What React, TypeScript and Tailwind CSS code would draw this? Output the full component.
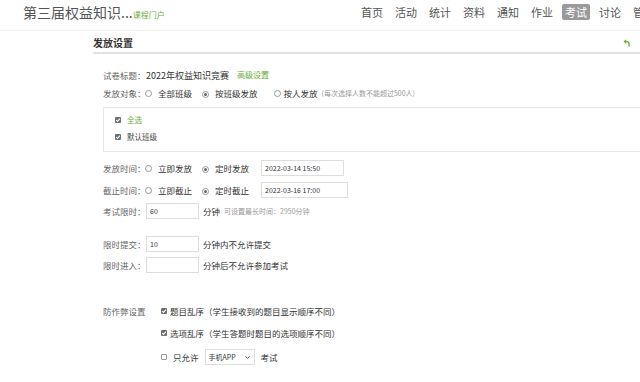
import { ChevronDown } from 'lucide-react';

const navItems = ['首页', '活动', '统计', '资料', '通知', '作业', '考试', '讨论', '管理'];

function Radio({ checked }: { checked?: boolean }) {
  return (
    <span className="inline-flex w-[7px] h-[7px] rounded-full border border-[#999] items-center justify-center shrink-0 bg-white">
      {checked && <span className="w-[3px] h-[3px] rounded-full bg-[#666]" />}
    </span>
  );
}

function Check({ checked }: { checked?: boolean }) {
  if (!checked) {
    return <span className="inline-block w-[6px] h-[6px] rounded-[1px] border border-[#999] bg-white shrink-0" />;
  }
  return (
    <span className="inline-flex w-[6px] h-[6px] rounded-[1px] bg-[#6e6e6e] items-center justify-center shrink-0">
      <svg width="6" height="6" viewBox="0 0 10 10">
        <path d="M2 5.2 L4.2 7.3 L8.2 2.8" stroke="#fff" strokeWidth="1.8" fill="none" />
      </svg>
    </span>
  );
}

function TextBox({ value, width }: { value?: string; width: string }) {
  return (
    <div className={`${width} h-[16px] border border-[#ddd] flex items-center px-[3px] text-[7px] text-[#333] bg-white`}>
      {value}
    </div>
  );
}

function Label({ children, width = 'w-[43px]' }: { children: React.ReactNode; width?: string }) {
  return <span className={`${width} shrink-0 whitespace-nowrap text-[#666]`}>{children}</span>;
}

export default function App() {
  return (
    <div className="w-[640px] h-[382px] overflow-hidden bg-white font-['Noto_Sans_CJK_SC',sans-serif]">
      {/* Top bar */}
      <div className="h-[31px] border-b border-[#eee] pl-[23px] pt-[4px]">
        <div className="flex items-center h-[16px]">
          <div className="w-[335px] shrink-0 flex items-baseline leading-none">
            <span className="text-[14px] text-[#555]">第三届权益知识...</span>
            <span className="text-[8px] text-[#6cad3c]">课程门户</span>
          </div>
          <div className="flex gap-[6px] shrink-0">
            {navItems.map((item) => (
              <span
                key={item}
                className={`px-[3px] h-[16px] flex items-center text-[11px] leading-none rounded-[2px] ${
                  item === '考试' ? 'bg-[#9a9a9a] text-white' : 'text-[#555]'
                }`}
              >
                {item}
              </span>
            ))}
          </div>
        </div>
      </div>

      {/* Section */}
      <div className="ml-[93px]">
        <div className="h-[23px] pt-[3px] border-b-2 border-[#e1e1e1] flex items-center justify-between pr-[10px]">
          <span className="text-[10px] font-bold text-[#333] leading-none">发放设置</span>
          <svg width="7" height="8" viewBox="0 0 10 11">
            <path d="M0.5 3.5 L4.6 0.3 L4.6 6.7 Z" fill="#6bb33a" />
            <path d="M4 3.5 H5.8 A2.8 2.8 0 0 1 8.6 6.3 V10.5" stroke="#6bb33a" strokeWidth="2" fill="none" />
          </svg>
        </div>

        <div className="pl-[10px] text-[8.5px] leading-none text-[#333] whitespace-nowrap">
          {/* 试卷标题 */}
          <div className="mt-[12px] h-[18px] flex items-center">
            <Label>试卷标题：</Label>
            <span className="text-[9px]">2022年权益知识竞赛</span>
            <span className="ml-[8px] text-[8px] text-[#6cad3c]">高级设置</span>
          </div>

          {/* 发放对象 */}
          <div className="h-[18px] flex items-center">
            <Label width="w-[42px]">发放对象：</Label>
            <Radio />
            <span className="ml-[6px]">全部班级</span>
            <span className="ml-[10px]"><Radio checked /></span>
            <span className="ml-[6px]">按班级发放</span>
            <span className="ml-[16px]"><Radio /></span>
            <span className="ml-[3px]">按人发放</span>
            <span className="ml-[4px] text-[7px] text-[#999]">(每次选择人数不能超过500人)</span>
          </div>

          {/* Class box */}
          <div className="mt-[5px] w-[560px] h-[45px] border border-[#e6e6e6] pt-[5px] pl-[11px]">
            <div className="h-[14px] flex items-center">
              <Check checked />
              <span className="ml-[6px] text-[7.5px] text-[#6cad3c]">全选</span>
            </div>
            <div className="mt-[3px] h-[14px] flex items-center">
              <Check checked />
              <span className="ml-[6px] text-[7.5px] text-[#444]">默认班级</span>
            </div>
          </div>

          {/* 发放时间 */}
          <div className="mt-[5px] h-[22px] flex items-center">
            <Label width="w-[42px]">发放时间：</Label>
            <Radio />
            <span className="ml-[6px]">立即发放</span>
            <span className="ml-[10px]"><Radio checked /></span>
            <span className="ml-[6px]">定时发放</span>
            <span className="ml-[12px]"><TextBox value="2022-03-14 15:50" width="w-[83px]" /></span>
          </div>

          {/* 截止时间 */}
          <div className="h-[22px] flex items-center">
            <Label width="w-[42px]">截止时间：</Label>
            <Radio />
            <span className="ml-[6px]">立即截止</span>
            <span className="ml-[10px]"><Radio checked /></span>
            <span className="ml-[6px]">定时截止</span>
            <span className="ml-[12px]"><TextBox value="2022-03-16 17:00" width="w-[87px]" /></span>
          </div>

          {/* 考试限时 */}
          <div className="h-[20px] flex items-center">
            <Label>考试限时：</Label>
            <TextBox value="60" width="w-[53px]" />
            <span className="ml-[4px]">分钟</span>
            <span className="ml-[4px] text-[7px] text-[#999]">可设置最长时间：2950分钟</span>
          </div>

          {/* 限时提交 */}
          <div className="mt-[13px] h-[20px] flex items-center">
            <Label>限时提交：</Label>
            <TextBox value="10" width="w-[53px]" />
            <span className="ml-[4px]">分钟内不允许提交</span>
          </div>

          {/* 限时进入 */}
          <div className="h-[22px] flex items-center">
            <Label>限时进入：</Label>
            <TextBox width="w-[53px]" />
            <span className="ml-[4px]">分钟后不允许参加考试</span>
          </div>

          {/* 防作弊设置 */}
          <div className="mt-[24px] h-[22px] flex items-center">
            <Label width="w-[58px]">防作弊设置</Label>
            <Check checked />
            <span className="ml-[3px]">题目乱序（学生接收到的题目显示顺序不同）</span>
          </div>
          <div className="h-[22px] flex items-center pl-[58px]">
            <Check checked />
            <span className="ml-[3px]">选项乱序（学生答题时题目的选项顺序不同）</span>
          </div>
          <div className="h-[26px] flex items-center pl-[58px]">
            <Check />
            <span className="ml-[6px]">只允许</span>
            <div className="ml-[6px] w-[50px] h-[16px] border border-[#ddd] flex items-center justify-between px-[3px] text-[7px]">
              <span>手机APP</span>
              <ChevronDown size={7} strokeWidth={3} />
            </div>
            <span className="ml-[6px]">考试</span>
          </div>
        </div>
      </div>
    </div>
  );
}
